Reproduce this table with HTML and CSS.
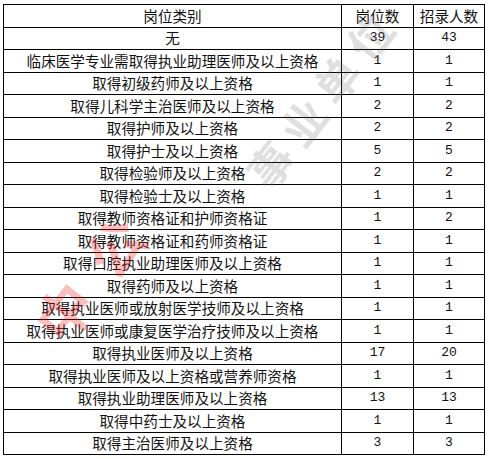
FILE: index.html
```html
<!DOCTYPE html>
<html lang="zh">
<head>
<meta charset="utf-8">
<link rel="stylesheet" href="styles.css">
</head>
<body>
<div class="page">
<table class="grid">
<colgroup><col class="c1"><col class="c2"><col class="c3"></colgroup>
<tr><td>岗位类别</td><td>岗位数</td><td>招录人数</td></tr>
<tr><td>无</td><td class="n">39</td><td class="n">43</td></tr>
<tr><td>临床医学专业需取得执业助理医师及以上资格</td><td class="n">1</td><td class="n">1</td></tr>
<tr><td>取得初级药师及以上资格</td><td class="n">1</td><td class="n">1</td></tr>
<tr><td>取得儿科学主治医师及以上资格</td><td class="n">2</td><td class="n">2</td></tr>
<tr><td>取得护师及以上资格</td><td class="n">2</td><td class="n">2</td></tr>
<tr><td>取得护士及以上资格</td><td class="n">5</td><td class="n">5</td></tr>
<tr><td>取得检验师及以上资格</td><td class="n">2</td><td class="n">2</td></tr>
<tr><td>取得检验士及以上资格</td><td class="n">1</td><td class="n">1</td></tr>
<tr><td>取得教师资格证和护师资格证</td><td class="n">1</td><td class="n">2</td></tr>
<tr><td>取得教师资格证和药师资格证</td><td class="n">1</td><td class="n">1</td></tr>
<tr><td>取得口腔执业助理医师及以上资格</td><td class="n">1</td><td class="n">1</td></tr>
<tr><td>取得药师及以上资格</td><td class="n">1</td><td class="n">1</td></tr>
<tr><td>取得执业医师或放射医学技师及以上资格</td><td class="n">1</td><td class="n">1</td></tr>
<tr><td>取得执业医师或康复医学治疗技师及以上资格</td><td class="n">1</td><td class="n">1</td></tr>
<tr><td>取得执业医师及以上资格</td><td class="n">17</td><td class="n">20</td></tr>
<tr><td>取得执业医师及以上资格或营养师资格</td><td class="n">1</td><td class="n">1</td></tr>
<tr><td>取得执业助理医师及以上资格</td><td class="n">13</td><td class="n">13</td></tr>
<tr><td>取得中药士及以上资格</td><td class="n">1</td><td class="n">1</td></tr>
<tr><td>取得主治医师及以上资格</td><td class="n">3</td><td class="n">3</td></tr>
</table>
<div class="wm wm-a"><span class="wm-text wm-red">中公</span></div>
<div class="wm wm-b"><span class="wm-text wm-gray">事业单位</span></div>
</div>
</body>
</html>
```
FILE: styles.css
```css
html, body {
  margin: 0;
  padding: 0;
  background: #ffffff;
}
.page {
  position: relative;
  width: 488px;
  height: 459px;
  overflow: hidden;
  padding: 4px 0 0 3px;
  box-sizing: border-box;
}
.grid {
  border-collapse: collapse;
  table-layout: fixed;
  width: 481px;
  font-family: "Noto Sans CJK SC", "Noto Sans", sans-serif;
  font-size: 14.6px;
  color: #111;
}
.c1 { width: 338px; }
.c2 { width: 72px; }
.c3 { width: 71px; }
.grid tr { height: 22.5px; }
.grid td {
  border: 1px solid #000;
  padding: 0;
  text-align: center;
  vertical-align: middle;
  line-height: 20px;
  white-space: nowrap;
  overflow: hidden;
}
.grid td.n {
  font-family: "Liberation Mono", "DejaVu Sans Mono", monospace;
  font-size: 13px;
}
.wm {
  position: absolute;
  width: 0;
  height: 0;
  pointer-events: none;
}
.wm-a { left: 96px; top: 268px; }
.wm-b { left: 322px; top: 96px; }
.wm-text {
  position: absolute;
  left: 0;
  top: 0;
  transform: translate(-50%, -50%) rotate(-52deg);
  font-family: "Noto Sans CJK SC", sans-serif;
  font-weight: 700;
  white-space: nowrap;
}
.wm-red {
  font-size: 56px;
  letter-spacing: 26px;
  color: rgba(235, 20, 20, 0.28);
}
.wm-gray {
  font-size: 44px;
  letter-spacing: 10px;
  color: rgba(110, 110, 110, 0.22);
}
```
